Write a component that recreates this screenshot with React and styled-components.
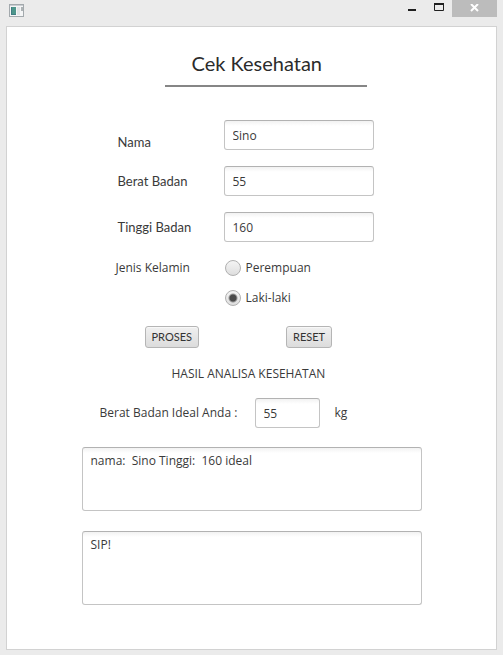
import React, { useState } from "react";
import styled, { createGlobalStyle, css } from "styled-components";

const uiFont = '"Open Sans", "Noto Sans", sans-serif';
const displayFont = 'Lato, "Open Sans", sans-serif';

const GlobalStyle = createGlobalStyle`
  *, *::before, *::after { box-sizing: border-box; }
  body {
    margin: 0;
    background: #ebebeb;
    color: #3a3a3a;
    font: 12px/16px ${uiFont};
  }
`;

const Window = styled.div`
  display: flex;
  flex-direction: column;
  min-height: 100vh;
  padding: 0 6px 5px;
`;

const TitleBar = styled.header`
  display: flex;
  align-items: flex-start;
  height: 26px;
`;

const AppIcon = styled.svg`
  display: block;
  margin: 4px auto 0 3px;
`;

const WindowButton = styled.button`
  display: grid;
  place-items: center;
  width: 27px;
  height: 17px;
  padding: 0;
  border: 0;
  background: transparent;
  color: #1f1f1f;
`;

const CloseButton = styled(WindowButton)`
  width: 45px;
  background: #bcbcbc;
  color: #ffffff;
`;

const Panel = styled.main`
  flex: 1;
  display: flex;
  justify-content: center;
  padding: 24px 16px 43px;
  border: 1px solid #d2d2d2;
  background: #ffffff;
`;

const Column = styled.div`
  display: flex;
  flex-direction: column;
  flex: 0 1 340px;
  min-width: 0;
`;

const Title = styled.h1`
  align-self: center;
  width: 202px;
  margin: 0 0 33px 28px;
  padding: 0 0 9px 27px;
  border-bottom: 2px solid #868686;
  color: #2b2b2b;
  font: 400 20px/25px ${displayFont};
`;

const Form = styled.form`
  display: flex;
  flex-direction: column;
`;

const Fields = styled.div`
  display: flex;
  flex-direction: column;
  gap: 16px;
  padding-left: 36px;
`;

const FieldRow = styled.div`
  display: grid;
  grid-template-columns: 106px minmax(0, 150px);
  align-items: ${(p) => (p.$align === "bottom" ? "end" : "center")};
`;

const FieldLabel = styled.label`
  font: 400 13px/16px ${displayFont};
`;

const inputSurface = css`
  border: 1px solid #c4c4c4;
  border-top-color: #b2b2b2;
  border-radius: 3px;
  background: linear-gradient(#f2f2f2, #ffffff 5px);
  color: #3a3a3a;
  font: 12px/16px ${uiFont};
  outline: none;
`;

const TextInput = styled.input`
  ${inputSurface}
  width: ${(p) => (p.$compact ? "65px" : "100%")};
  height: 30px;
  padding: 0 8px;
`;

const RadioGroup = styled.div`
  display: grid;
  grid-template-columns: 109px 1fr;
  margin: 18px 0 0 34px;
`;

const RadioList = styled.div`
  display: flex;
  flex-direction: column;
  align-items: flex-start;
  gap: 14px;
`;

const RadioLabel = styled.label`
  display: flex;
  align-items: center;
  gap: 5px;
`;

const Radio = styled.input`
  appearance: none;
  width: 16px;
  height: 16px;
  margin: 0;
  border: 1px solid #b0b0b0;
  border-radius: 50%;
  background: linear-gradient(#f4f4f4, #dedede);

  &:checked {
    background:
      radial-gradient(circle, #4a4a4a 3px, transparent 5px),
      linear-gradient(#f4f4f4, #dedede);
  }
`;

const Actions = styled.div`
  display: flex;
  gap: 87px;
  margin: 20px 0 18px 63px;
`;

const ActionButton = styled.button`
  height: 22px;
  padding: 0 6px;
  border: 1px solid #b5b5b5;
  border-radius: 3px;
  background: linear-gradient(#f0f0f0, #dcdcdc);
  box-shadow: inset 0 1px #f8f8f8;
  color: #333333;
  font: 400 11px/16px ${displayFont};
`;

const ResultTitle = styled.h2`
  margin: 0 0 16px 90px;
  font: 400 12px/16px ${uiFont};
`;

const IdealRow = styled.div`
  display: grid;
  grid-template-columns: 155px 65px auto;
  align-items: center;
  margin: 0 0 19px 18px;

  span { padding-left: 15px; }
`;

const Notes = styled.textarea`
  ${inputSurface}
  display: block;
  width: 100%;
  height: ${(p) => (p.$tall ? "74px" : "64px")};
  padding: 5px 8px;
  resize: none;

  & + & { margin-top: 20px; }
`;

function TextField({ id, label, value, align }) {
  return (
    <FieldRow $align={align}>
      <FieldLabel htmlFor={id}>{label}</FieldLabel>
      <TextInput id={id} name={id} defaultValue={value} />
    </FieldRow>
  );
}

export default function App() {
  const [gender, setGender] = useState("Laki-laki");

  return (
    <Window>
      <GlobalStyle />
      <TitleBar>
        <AppIcon width="15" height="13" viewBox="0 0 15 13" aria-hidden="true">
          <rect x=".5" y=".5" width="14" height="12" fill="#f4f5f6" stroke="#a3a9ad" />
          <path d="M1 1.5h13" stroke="#c9cdd1" />
          <rect x="2" y="3" width="5" height="8" fill="#4d968b" />
          <path d="M2 10.5h5M2.5 3v8" stroke="#407c82" />
          <rect x="8" y="3" width="3" height="8" fill="#e2e5e6" />
          <rect x="12" y="3" width="2" height="4" fill="#adb3b5" />
        </AppIcon>
        <WindowButton type="button" aria-label="Minimize">
          <svg width="11" height="11" viewBox="0 0 11 11">
            <path d="M2 7h8" stroke="currentColor" strokeWidth="2" />
          </svg>
        </WindowButton>
        <WindowButton type="button" aria-label="Maximize">
          <svg width="11" height="11" viewBox="0 0 11 11">
            <path d="M1 1h10" stroke="currentColor" strokeWidth="2" />
            <path d="M1.5 1v6.5h9V1" fill="none" stroke="currentColor" />
          </svg>
        </WindowButton>
        <CloseButton type="button" aria-label="Close">
          <svg width="9" height="9" viewBox="0 0 9 9">
            <path d="M1 0l7 7M8 0l-7 7" stroke="currentColor" strokeWidth="2" />
          </svg>
        </CloseButton>
      </TitleBar>
      <Panel>
        <Column>
          <Title>Cek Kesehatan</Title>
          <Form onSubmit={(e) => e.preventDefault()}>
            <Fields>
              <TextField id="nama" label="Nama" value="Sino" align="bottom" />
              <TextField id="berat" label="Berat Badan" value="55" />
              <TextField id="tinggi" label="Tinggi Badan" value="160" />
            </Fields>
            <RadioGroup role="radiogroup" aria-labelledby="gender-label">
              <span id="gender-label">Jenis Kelamin</span>
              <RadioList>
                {["Perempuan", "Laki-laki"].map((option) => (
                  <RadioLabel key={option}>
                    <Radio
                      type="radio"
                      name="gender"
                      checked={gender === option}
                      onChange={() => setGender(option)}
                    />
                    {option}
                  </RadioLabel>
                ))}
              </RadioList>
            </RadioGroup>
            <Actions>
              <ActionButton type="submit">PROSES</ActionButton>
              <ActionButton type="reset">RESET</ActionButton>
            </Actions>
          </Form>
          <ResultTitle>HASIL ANALISA KESEHATAN</ResultTitle>
          <IdealRow>
            <label htmlFor="ideal">Berat Badan Ideal Anda :</label>
            <TextInput id="ideal" $compact defaultValue="55" />
            <span>kg</span>
          </IdealRow>
          <Notes aria-label="Hasil" defaultValue="nama:  Sino Tinggi:  160 ideal" />
          <Notes aria-label="Saran" $tall defaultValue="SIP!" />
        </Column>
      </Panel>
    </Window>
  );
}
